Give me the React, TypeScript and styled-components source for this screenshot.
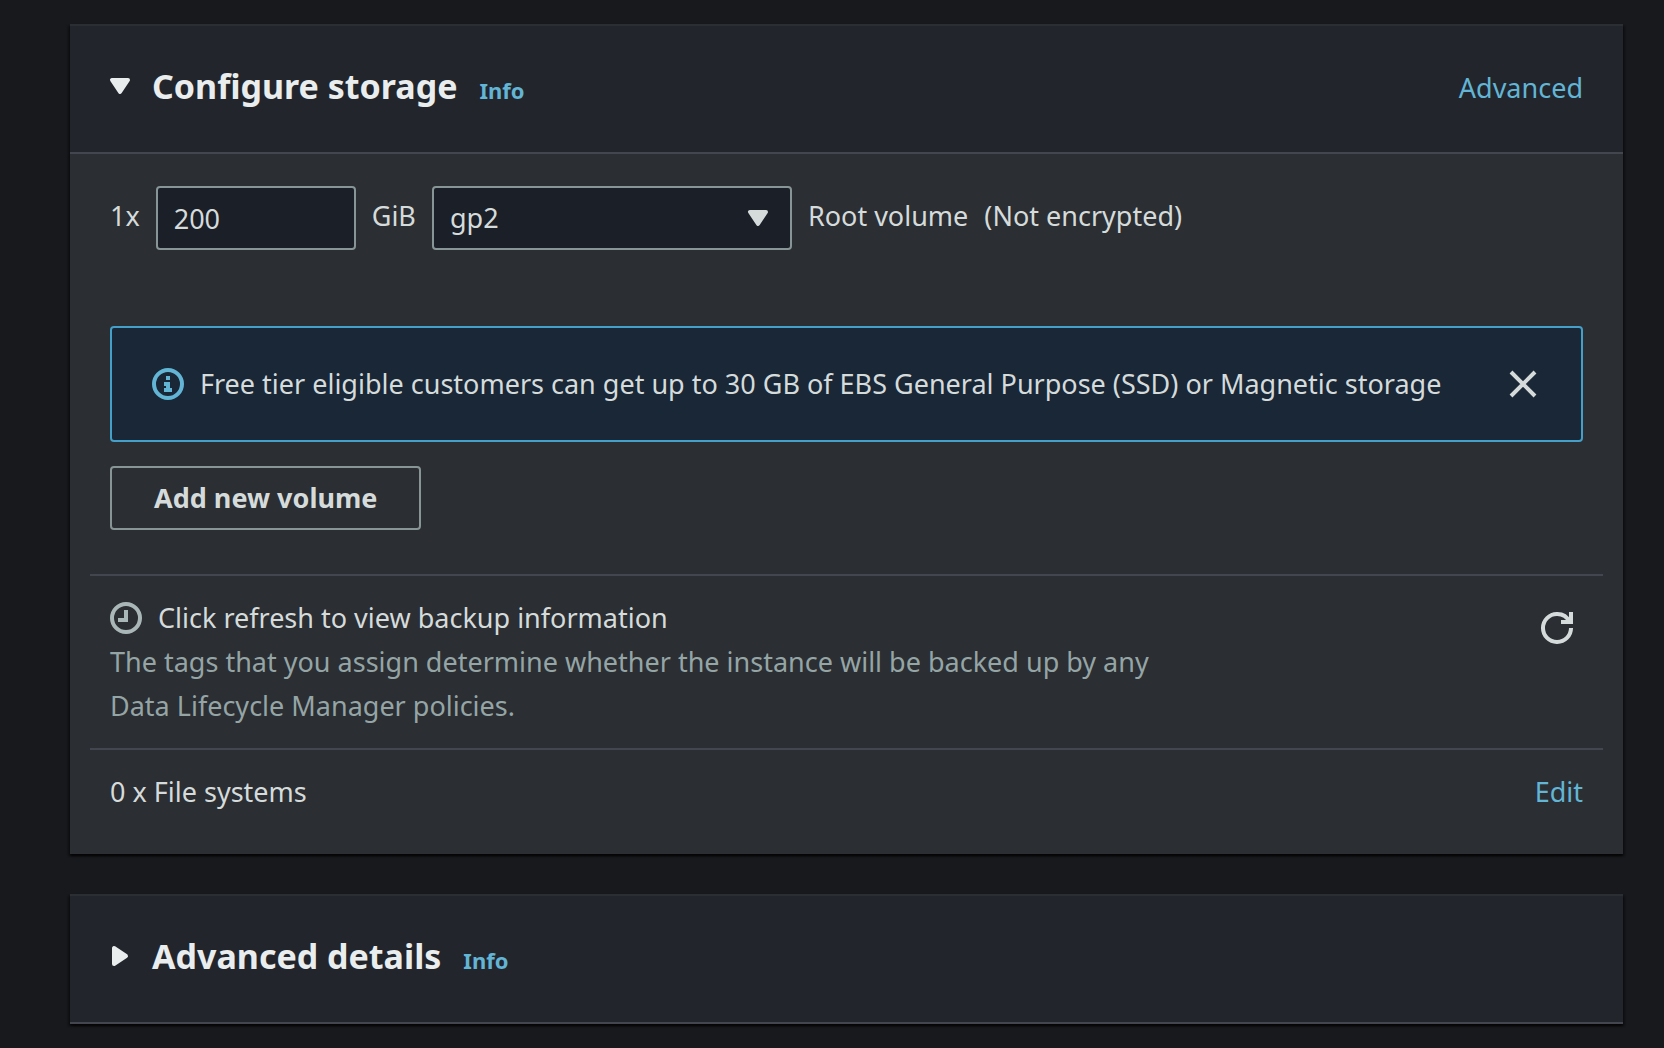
import React from "react";
import styled, { createGlobalStyle } from "styled-components";

const color = {
  page: "#18191d",
  header: "#22252c",
  body: "#2b2e32",
  field: "#1b1f27",
  fieldBorder: "#879596",
  divider: "#43464f",
  edge: "#2b2e32",
  heading: "#eaeded",
  text: "#d5dbdb",
  muted: "#95a5a6",
  icon: "#aab7b8",
  link: "#62b5d5",
  info: "#44a0c8",
  infoBackground: "#192737",
};

const GlobalStyle = createGlobalStyle`
  *, *::before, *::after { box-sizing: border-box; }
  body {
    margin: 0;
    background: ${color.page};
    color: ${color.text};
    font-family: "Noto Sans", "Open Sans", sans-serif;
    font-size: 27px;
    line-height: 44px;
  }
  button, input, select { font: inherit; color: inherit; }
`;

const Page = styled.main`
  display: flex;
  flex-direction: column;
  gap: 40px;
  padding: 24px 41px 24px 70px;
`;

const Card = styled.section`
  background: ${color.body};
  border-top: 2px solid ${color.edge};
  box-shadow: 0 2px 2px rgba(0, 0, 0, 0.6), 2px 2px 2px rgba(0, 0, 0, 0.3),
    -2px 2px 2px rgba(0, 0, 0, 0.3);
`;

const CardHeader = styled.header`
  display: flex;
  align-items: center;
  justify-content: space-between;
  padding: 38px 40px 44px;
  background: ${color.header};
  border-bottom: 2px solid ${color.divider};
`;

const HeaderGroup = styled.div`
  display: flex;
  align-items: flex-end;
  gap: 22px;
`;

const Title = styled.h2`
  margin: 0;
  font-size: 34px;
  line-height: 44px;
`;

const Toggle = styled.button`
  display: flex;
  align-items: center;
  gap: 16px;
  padding: 0;
  border: 0;
  background: none;
  color: ${color.heading};
  font-weight: 700;
`;

const Link = styled.a`
  color: ${color.link};
  text-decoration: none;
`;

const InfoLink = styled(Link)`
  font-size: 22px;
  line-height: 36px;
  font-weight: 700;
`;

const ActionLink = styled(Link)`
  padding-top: 4px;
  line-height: 40px;
`;

const Icon = styled.svg`
  display: block;
  flex: none;
  width: 32px;
  height: 32px;
  fill: none;
  stroke: currentColor;
  stroke-width: 2;
`;

const ToggleIcon = styled(Icon)`
  margin-left: -6px;
`;

const CardBody = styled.div`
  padding: 32px 20px 40px;
`;

const Block = styled.div`
  padding: 0 20px;
`;

const VolumeRow = styled.div`
  display: flex;
  align-items: center;
  flex-wrap: wrap;
  gap: 16px;
  margin-bottom: 76px;
`;

const RowText = styled.label`
  padding-bottom: 4px;
`;

const SizeInput = styled.input`
  width: 200px;
  height: 64px;
  padding: 0 16px;
  background: ${color.field};
  border: 2px solid ${color.fieldBorder};
  border-radius: 4px;
`;

const SelectBox = styled.div`
  position: relative;
  width: 360px;
`;

const TypeSelect = styled.select`
  display: block;
  width: 100%;
  height: 64px;
  padding: 0 56px 0 16px;
  appearance: none;
  background: ${color.field};
  border: 2px solid ${color.fieldBorder};
  border-radius: 4px;
`;

const SelectIcon = styled(Icon)`
  position: absolute;
  top: 16px;
  right: 18px;
  pointer-events: none;
`;

const Alert = styled.div`
  display: flex;
  align-items: center;
  gap: 16px;
  padding: 34px 42px 34px 40px;
  margin-bottom: 24px;
  color: ${color.text};
  background: ${color.infoBackground};
  border: 2px solid ${color.info};
  border-radius: 4px;
`;

const AlertText = styled.div`
  flex: 1;
`;

const AlertIcon = styled(Icon)`
  color: ${color.link};
`;

const IconButton = styled.button`
  padding: 0;
  border: 0;
  background: none;
`;

const AddButton = styled.button`
  height: 64px;
  padding: 0 42px;
  background: none;
  border: 2px solid ${color.fieldBorder};
  border-radius: 4px;
  font-weight: 700;
`;

const Divided = styled.div<{ $top: number; $gap: number }>`
  display: flex;
  align-items: flex-start;
  justify-content: space-between;
  margin-top: ${(p) => p.$top}px;
  padding: ${(p) => p.$gap}px 20px 0;
  border-top: 2px solid ${color.divider};
`;

const Backup = styled.div`
  max-width: 72%;
`;

const BackupStatus = styled.div`
  display: flex;
  align-items: center;
  gap: 16px;
`;

const ClockIcon = styled(Icon)`
  color: ${color.icon};
`;

const Description = styled.p`
  margin: 0;
  color: ${color.muted};
`;

const RefreshButton = styled(IconButton)`
  padding: 16px 10px 0;
`;

function Caret({ open = true }: { open?: boolean }) {
  return (
    <path
      d={open ? "M4 5h8l-4 6z" : "M5 4v8l6-4z"}
      fill="currentColor"
      strokeLinejoin="round"
    />
  );
}

function Header({ title, open, action }: { title: string; open: boolean; action?: string }) {
  return (
    <CardHeader>
      <HeaderGroup>
        <Title>
          <Toggle type="button" aria-expanded={open}>
            <ToggleIcon viewBox="0 0 16 16" aria-hidden="true">
              <Caret open={open} />
            </ToggleIcon>
            {title}
          </Toggle>
        </Title>
        <InfoLink href="#info">Info</InfoLink>
      </HeaderGroup>
      {action && <ActionLink href="#advanced">{action}</ActionLink>}
    </CardHeader>
  );
}

export default function App() {
  return (
    <>
      <GlobalStyle />
      <Page>
        <Card>
          <Header title="Configure storage" open action="Advanced" />
          <CardBody>
            <Block>
              <VolumeRow>
                <RowText htmlFor="volume-size">1x</RowText>
                <SizeInput id="volume-size" inputMode="numeric" defaultValue="200" />
                <RowText htmlFor="volume-type">GiB</RowText>
                <SelectBox>
                  <TypeSelect id="volume-type" defaultValue="gp2">
                    <option>gp2</option>
                  </TypeSelect>
                  <SelectIcon viewBox="0 0 16 16" aria-hidden="true">
                    <Caret />
                  </SelectIcon>
                </SelectBox>
                <RowText as="span">Root volume</RowText>
                <RowText as="span">(Not encrypted)</RowText>
              </VolumeRow>
              <Alert role="status">
                <AlertIcon viewBox="0 0 16 16" aria-hidden="true">
                  <circle cx="8" cy="8" r="7" />
                  <path d="M7 5h2M6 8h2v4M6 11h4" />
                </AlertIcon>
                <AlertText>
                  Free tier eligible customers can get up to 30 GB of EBS General Purpose (SSD) or
                  Magnetic storage
                </AlertText>
                <IconButton type="button" aria-label="Dismiss">
                  <Icon viewBox="0 0 16 16" aria-hidden="true">
                    <path d="m2 2 12 12M14 2 2 14" />
                  </Icon>
                </IconButton>
              </Alert>
              <AddButton type="button">Add new volume</AddButton>
            </Block>
            <Divided $top={44} $gap={20}>
              <Backup>
                <BackupStatus>
                  <ClockIcon viewBox="0 0 16 16" aria-hidden="true">
                    <circle cx="8" cy="8" r="7" />
                    <path d="M8 4v5H4" />
                  </ClockIcon>
                  Click refresh to view backup information
                </BackupStatus>
                <Description>
                  The tags that you assign determine whether the instance will be backed up by any
                  Data Lifecycle Manager policies.
                </Description>
              </Backup>
              <RefreshButton type="button" aria-label="Refresh backup information">
                <Icon viewBox="0 0 16 16" aria-hidden="true">
                  <path d="M10 5h5V0" />
                  <path d="M15 8a6.957 6.957 0 0 1-7 7 6.957 6.957 0 0 1-7-7 6.957 6.957 0 0 1 7-7 6.87 6.87 0 0 1 6.3 4" />
                </Icon>
              </RefreshButton>
            </Divided>
            <Divided $top={20} $gap={20}>
              <span>0 x File systems</span>
              <Link href="#edit">Edit</Link>
            </Divided>
          </CardBody>
        </Card>
        <Card>
          <Header title="Advanced details" open={false} />
        </Card>
      </Page>
    </>
  );
}
